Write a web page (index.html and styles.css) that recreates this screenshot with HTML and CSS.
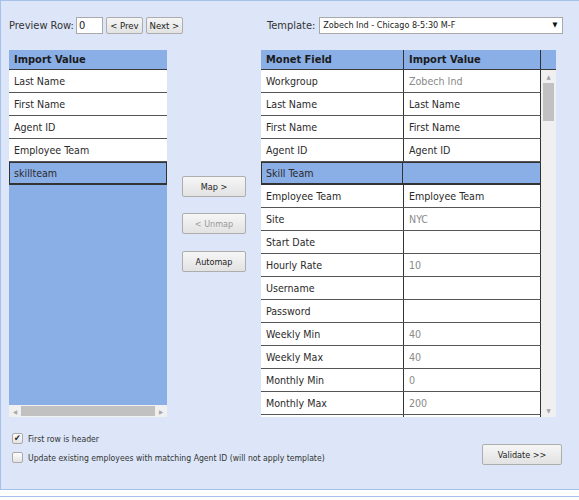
FILE: index.html
```html
<!DOCTYPE html>
<html>
<head>
<meta charset="utf-8">
<link rel="stylesheet" href="styles.css">
</head>
<body>
<div class="panel">
  <div class="toprow">
    <div class="preview">
      <span class="lbl">Preview Row:</span>
      <input class="rowinput" type="text" value="0">
      <button class="btn small">&lt; Prev</button>
      <button class="btn small">Next &gt;</button>
    </div>
    <div class="template">
      <span class="lbl">Template:</span>
      <div class="select"><span>Zobech Ind - Chicago 8-5:30 M-F</span><span class="caret">&#9660;</span></div>
    </div>
  </div>
  <div class="main">
    <div class="leftlist">
      <div class="lhead">Import Value</div>
      <div class="lrows">
        <div class="lrow">Last Name</div>
        <div class="lrow">First Name</div>
        <div class="lrow">Agent ID</div>
        <div class="lrow">Employee Team</div>
        <div class="lrow sel">skillteam</div>
      </div>
      <div class="hscroll">
        <span class="arr">&#9664;</span><div class="hthumb"></div><span class="arr">&#9654;</span>
      </div>
    </div>
    <div class="actions">
      <button class="btn act">Map &gt;</button>
      <button class="btn act disabled">&lt; Unmap</button>
      <button class="btn act">Automap</button>
    </div>
    <div class="righttable">
      <div class="rhead">
        <div class="c1">Monet Field</div>
        <div class="c2">Import Value</div>
        <div class="c3"></div>
      </div>
      <div class="rbody">
        <div class="rrows">
          <div class="rrow"><div class="c1">Workgroup</div><div class="c2 dim">Zobech Ind</div></div>
          <div class="rrow"><div class="c1">Last Name</div><div class="c2">Last Name</div></div>
          <div class="rrow"><div class="c1">First Name</div><div class="c2">First Name</div></div>
          <div class="rrow"><div class="c1">Agent ID</div><div class="c2">Agent ID</div></div>
          <div class="rrow sel"><div class="c1">Skill Team</div><div class="c2"></div></div>
          <div class="rrow"><div class="c1">Employee Team</div><div class="c2">Employee Team</div></div>
          <div class="rrow"><div class="c1">Site</div><div class="c2 dim">NYC</div></div>
          <div class="rrow"><div class="c1">Start Date</div><div class="c2"></div></div>
          <div class="rrow"><div class="c1">Hourly Rate</div><div class="c2 dim">10</div></div>
          <div class="rrow"><div class="c1">Username</div><div class="c2"></div></div>
          <div class="rrow"><div class="c1">Password</div><div class="c2"></div></div>
          <div class="rrow"><div class="c1">Weekly Min</div><div class="c2 dim">40</div></div>
          <div class="rrow"><div class="c1">Weekly Max</div><div class="c2 dim">40</div></div>
          <div class="rrow"><div class="c1">Monthly Min</div><div class="c2 dim">0</div></div>
          <div class="rrow"><div class="c1">Monthly Max</div><div class="c2 dim">200</div></div>
          <div class="rrow"><div class="c1"></div><div class="c2"></div></div>
        </div>
        <div class="vscroll">
          <span class="varr">&#9650;</span>
          <div class="vthumb"></div>
          <div class="vspace"></div>
          <span class="varr">&#9660;</span>
        </div>
      </div>
    </div>
  </div>
  <div class="bottom">
    <div class="checks">
      <label class="chk"><span class="box checked">&#10004;</span>First row is header</label>
      <label class="chk"><span class="box"></span>Update existing employees with matching Agent ID (will not apply template)</label>
    </div>
    <button class="btn validate">Validate &gt;&gt;</button>
  </div>
</div>
<div class="footer"></div>
</body>
</html>
```
FILE: styles.css
```css
* { box-sizing: border-box; }
html, body { margin: 0; padding: 0; background: #fff; }
body {
  font-family: "DejaVu Sans Condensed", "DejaVu Sans", sans-serif;
  font-size: 10.6px;
  color: #2a2a2a;
  width: 579px;
  overflow: hidden;
}
.panel {
  width: 600px;
  height: 490px;
  background: #dce6f8;
  border-top: 1px solid #a7c2ea;
  border-left: 1px solid #a7c2ea;
  border-bottom: 1px solid #a7c2ea;
  padding: 15px 0 0 8px;
}
.footer {
  margin-top: 6px;
  height: 4px;
  border-top: 1px solid #a7c2ea;
}
.toprow {
  display: flex;
  height: 18px;
  align-items: center;
}
.lbl { color: #333; font-size: 11px; }
.preview { display: flex; align-items: center; width: 258px; }
.rowinput {
  width: 27px; height: 17px; margin: 0 3px 0 2px;
  border: 1px solid #a9a9a9; background: #fff;
  font: 11px "DejaVu Sans Condensed", sans-serif; padding: 0 2px; color: #222;
}
.btn {
  font-family: "DejaVu Sans Condensed", sans-serif;
  background: linear-gradient(#f6f6f6, #e2e2e2);
  border: 1px solid #adadad;
  border-radius: 2px;
  color: #222;
  padding: 0;
  cursor: default;
}
.btn.small { height: 17px; font-size: 9.5px; margin: 0 3px 0 0; width: 37px; }
.template { display: flex; align-items: center; }
.template .lbl { margin-right: 4px; }
.select {
  width: 244px; height: 17px;
  background: #fff; border: 1px solid #a9a9a9;
  display: flex; align-items: center; justify-content: space-between;
  font-size: 9px; padding: 0 5px 0 3px; color: #222;
}
.caret { font-size: 7px; color: #111; }

.main {
  display: flex;
  margin-top: 16px;
  height: 367px;
}
.leftlist {
  width: 158px;
  background: #8aaee6;
  display: flex;
  flex-direction: column;
}
.lhead, .rhead {
  height: 20px;
  background: #8aaee6;
  font-weight: bold;
  font-size: 11px;
  color: #1b1b1b;
  border-bottom: 1px solid #3a3a3a;
}
.lhead { padding: 3px 5px; }
.lrows { flex: 1; }
.lrow {
  height: 23px;
  background: #fff;
  border-bottom: 1px solid #555;
  padding: 5px 5px 3px;
}
.lrow.sel {
  background: #8aaee6;
  border: 1px solid #333;
  border-bottom-width: 2px;
  padding: 4px 4px;
}
.hscroll {
  height: 12px;
  background: #f0f0f0;
  display: flex;
  align-items: center;
}
.arr { font-size: 6px; color: #a8a8a8; width: 12px; text-align: center; }
.hthumb { flex: 1; height: 10px; background: #c1c1c1; }

.actions {
  width: 94px;
  display: flex;
  flex-direction: column;
  align-items: center;
  padding-top: 126px;
  gap: 16px;
}
.btn.act { width: 64px; height: 21px; font-size: 9px; }
.btn.act:nth-child(3) { margin-top: 1px; }
.btn.disabled { color: #999; }

.righttable {
  width: 295px;
  display: flex;
  flex-direction: column;
  background: #fff;
}
.rhead { display: flex; }
.rhead .c1, .rrow .c1 { width: 143px; border-right: 1px solid #333; }
.rhead .c2, .rrow .c2 { width: 137px; border-right: 1px solid #333; }
.rhead .c3 { width: 15px; }
.rhead > div { padding: 3px 5px; }
.rbody { flex: 1; display: flex; overflow: hidden; }
.rrows { width: 280px; overflow: hidden; }
.rrow {
  display: flex;
  height: 23px;
  border-bottom: 1px solid #555;
  background: #fff;
}
.rrow > div { padding: 5px 5px 3px; }
.rrow.sel { background: #8aaee6; border: 1px solid #333; border-bottom-width: 2px; }
.rrow.sel > div { padding-top: 4px; }
.rrow.sel .c1 { width: 142px; padding-left: 4px; }
.rrow.sel .c2 { border-right: none; }
.dim { color: #8a8a8a; }
.vscroll {
  width: 15px;
  background: #f0f0f0;
  display: flex;
  flex-direction: column;
  align-items: center;
}
.varr { font-size: 6px; color: #a3a3a3; height: 13px; line-height: 13px; }
.vthumb { width: 11px; height: 38px; background: #c1c1c1; }
.vspace { flex: 1; }

.bottom {
  display: flex;
  margin-top: 15px;
  align-items: flex-start;
  width: 553px;
}
.checks { flex: 1; display: flex; flex-direction: column; gap: 6px; }
.chk { display: flex; align-items: center; font-size: 8.6px; color: #333; height: 13px; }
.box {
  width: 11px; height: 11px; border: 1px solid #aaa; border-radius: 2px;
  background: linear-gradient(#fdfdfd, #e3e3e3);
  margin: 0 5px 0 3px; font-size: 9px; line-height: 9px; text-align: center; color: #222;
}
.btn.validate { width: 80px; height: 21px; font-size: 9px; margin-top: 12px; }
```
